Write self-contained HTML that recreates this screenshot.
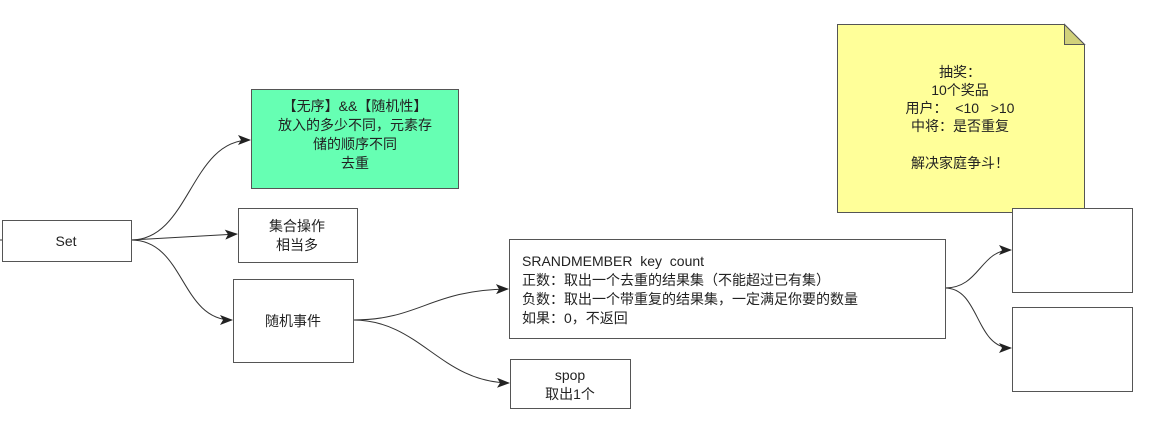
<!DOCTYPE html>
<html><head><meta charset="utf-8"><style>
html,body{margin:0;padding:0;background:#fff;width:1151px;height:424px;overflow:hidden}
svg text{font-family:"Liberation Sans","Noto Sans CJK SC",sans-serif;font-size:14px;fill:#222;white-space:pre}
</style></head><body>
<svg width="1151" height="424" viewBox="0 0 1151 424" xmlns="http://www.w3.org/2000/svg">
<defs><marker id="a" markerWidth="13" markerHeight="10" refX="12" refY="5" orient="auto" markerUnits="userSpaceOnUse"><path d="M0,0 L13,5 L0,10 L3,5 Z" fill="#222"/></marker></defs>
<g fill="none" stroke="#333" stroke-width="1">
<path d="M0,240 L2,240"/>
<path d="M131,240 C190,240 190,140 250,140" marker-end="url(#a)"/>
<path d="M131,240 L237,234" marker-end="url(#a)"/>
<path d="M131,240 C185,240 180,320 232,320" marker-end="url(#a)"/>
<path d="M353,320 C420,320 430,290 508,289" marker-end="url(#a)"/>
<path d="M353,320 C420,320 440,382 509,383" marker-end="url(#a)"/>
<path d="M945,288 C980,288 980,250 1011,250" marker-end="url(#a)"/>
<path d="M945,288 C980,288 975,348 1011,348" marker-end="url(#a)"/>
</g>
<g stroke="#555" stroke-width="1">
<rect x="2.5" y="220.5" width="129" height="41" fill="#fff"/>
<rect x="251.5" y="89.5" width="207" height="99" fill="#66ffb3"/>
<rect x="238.5" y="208.5" width="119" height="54" fill="#fff"/>
<rect x="233.5" y="279.5" width="120" height="83" fill="#fff"/>
<rect x="509.5" y="239.5" width="436" height="99" fill="#fff"/>
<rect x="510.5" y="359.5" width="120" height="49" fill="#fff"/>
<path d="M837.5,24.5 L1064.5,24.5 L1084.5,44.5 L1084.5,212.5 L837.5,212.5 Z" fill="#ffff99"/>
<path d="M1064.5,24.5 L1064.5,44.5 L1084.5,44.5 Z" fill="#d1d17a"/>
<rect x="1012.5" y="208.5" width="120" height="84" fill="#fff"/>
<rect x="1012.5" y="307.5" width="120" height="84" fill="#fff"/>
</g>
<g text-anchor="middle">
<text x="66" y="246">Set</text>
<text x="355" y="111">【无序】&amp;&amp;【随机性】</text>
<text x="355" y="130">放入的多少不同，元素存</text>
<text x="355" y="149">储的顺序不同</text>
<text x="355" y="168">去重</text>
<text x="297" y="231">集合操作</text>
<text x="297" y="250">相当多</text>
<text x="293" y="326">随机事件</text>
<text x="570" y="380">spop</text>
<text x="570" y="399">取出1个</text>
<text x="960" y="77">抽奖：</text>
<text x="960" y="95">10个奖品</text>
<text x="960" y="113">用户：  &lt;10   &gt;10</text>
<text x="960" y="131">中将：是否重复</text>
<text x="960" y="168">解决家庭争斗！</text>
</g>
<text x="522" y="266">SRANDMEMBER  key  count</text>
<text x="522" y="285">正数：取出一个去重的结果集（不能超过已有集）</text>
<text x="522" y="304">负数：取出一个带重复的结果集，一定满足你要的数量</text>
<text x="522" y="323">如果：0，不返回</text>
</svg>
</body></html>
